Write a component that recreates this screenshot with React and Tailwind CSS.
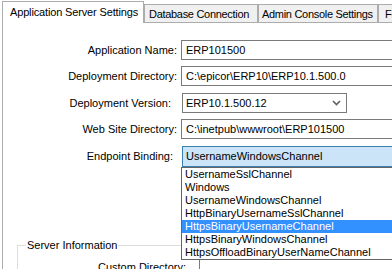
import React from "react";

const ENDPOINTS = [
  "UsernameSslChannel",
  "Windows",
  "UsernameWindowsChannel",
  "HttpBinaryUsernameSslChannel",
  "HttpsBinaryUsernameChannel",
  "HttpsBinaryWindowsChannel",
  "HttpsOffloadBinaryUserNameChannel",
];

const TABS = [
  { name: "Database Connection", cls: "w-[114px] pl-[4px]" },
  { name: "Admin Console Settings", cls: "w-[120px] pl-[3px]" },
  { name: "Features", cls: "w-[80px] pl-[6px]" },
];

function Chevron() {
  return (
    <svg width="9" height="6" viewBox="0 0 9 6" fill="none">
      <polyline points="1,1 4.5,4.5 8,1" stroke="#606060" strokeWidth="1.6" />
    </svg>
  );
}

export default function App() {
  const selected = "HttpsBinaryUsernameChannel";

  return (
    <div className="relative w-[392px] h-[269px] overflow-hidden bg-white text-[11px] leading-[13px] text-black font-['Liberation_Sans',Arial,sans-serif]">

      {/* Tab strip */}
      <div className="flex items-end h-[22px] pl-[2px] pt-[1px]">
        <div className="relative z-10 -mb-px flex h-[22px] w-[142px] shrink-0 items-start border-x border-t border-[#acacac] bg-white pl-[7px] pt-[4px] tracking-[-0.15px]">
          Application Server Settings
        </div>
        {TABS.map((t) => (
          <div
            key={t.name}
            className={`flex h-[18px] ${t.cls} shrink-0 items-center overflow-hidden border-x border-t border-[#acacac] bg-[#f0f0f0] pt-[1px] tracking-[-0.3px] whitespace-nowrap`}
          >
            {t.name}
          </div>
        ))}
      </div>

      {/* Panel */}
      <div className="ml-[2px] w-[420px] h-[260px] border-l border-t border-[#acacac] bg-white pt-[17px]">

        <div className="flex h-[20px] items-center">
          <div className="w-[174px] text-right">Application Name:</div>
          <div className="ml-[4px] flex h-[20px] w-[230px] items-center border border-[#7a7a7a] pl-[4px]">ERP101500</div>
        </div>

        <div className="mt-[6px] flex h-[20px] items-center">
          <div className="w-[174px] text-right">Deployment Directory:</div>
          <div className="ml-[4px] flex h-[20px] w-[230px] items-center border border-[#7a7a7a] pl-[4px]">C:\epicor\ERP10\ERP10.1.500.0</div>
        </div>

        <div className="mt-[7px] flex h-[20px] items-center">
          <div className="w-[174px] pr-[6px] text-right">Deployment Version:</div>
          <div className="ml-[5px] flex h-[20px] w-[165px] items-center justify-between border border-[#7a7a7a] pl-[3px] pr-[5px]">
            <span>ERP10.1.500.12</span>
            <Chevron />
          </div>
        </div>

        <div className="mt-[6px] flex h-[20px] items-center">
          <div className="w-[174px] text-right">Web Site Directory:</div>
          <div className="ml-[4px] flex h-[20px] w-[230px] items-center border border-[#7a7a7a] pl-[4px]">C:\inetpub\wwwroot\ERP101500</div>
        </div>

        <div className="mt-[7px] flex h-[21px] items-center">
          <div className="w-[174px] pr-[4px] text-right">Endpoint Binding:</div>
          <div className="ml-[5px] flex h-[21px] w-[230px] items-center border border-[#3c7fb1] bg-[#cce4f7] pl-[3px]">UsernameWindowsChannel</div>
        </div>

        {/* Server Information group */}
        <fieldset className="ml-[14px] mt-[72px] w-[400px] border-l border-t border-[#dcdcdc] pl-[8px]">
          <legend className="px-[1px] leading-[13px]">Server Information</legend>
          <div className="mt-[5px] flex h-[20px] items-center">
            <div className="w-[160px] text-right">Custom Directory:</div>
            <div className="ml-[13px] h-[20px] w-[200px] border border-[#7a7a7a]" />
          </div>
        </fieldset>
      </div>

      {/* Open dropdown list */}
      <div className="absolute left-[181px] top-[167px] w-[230px] border border-[#646464] bg-white">
        {ENDPOINTS.map((e) => (
          <div
            key={e}
            className={`h-[13px] pl-[3px] leading-[13px] whitespace-nowrap ${
              e === selected ? "bg-[#3390ff] text-white" : ""
            }`}
          >
            {e}
          </div>
        ))}
      </div>
    </div>
  );
}
